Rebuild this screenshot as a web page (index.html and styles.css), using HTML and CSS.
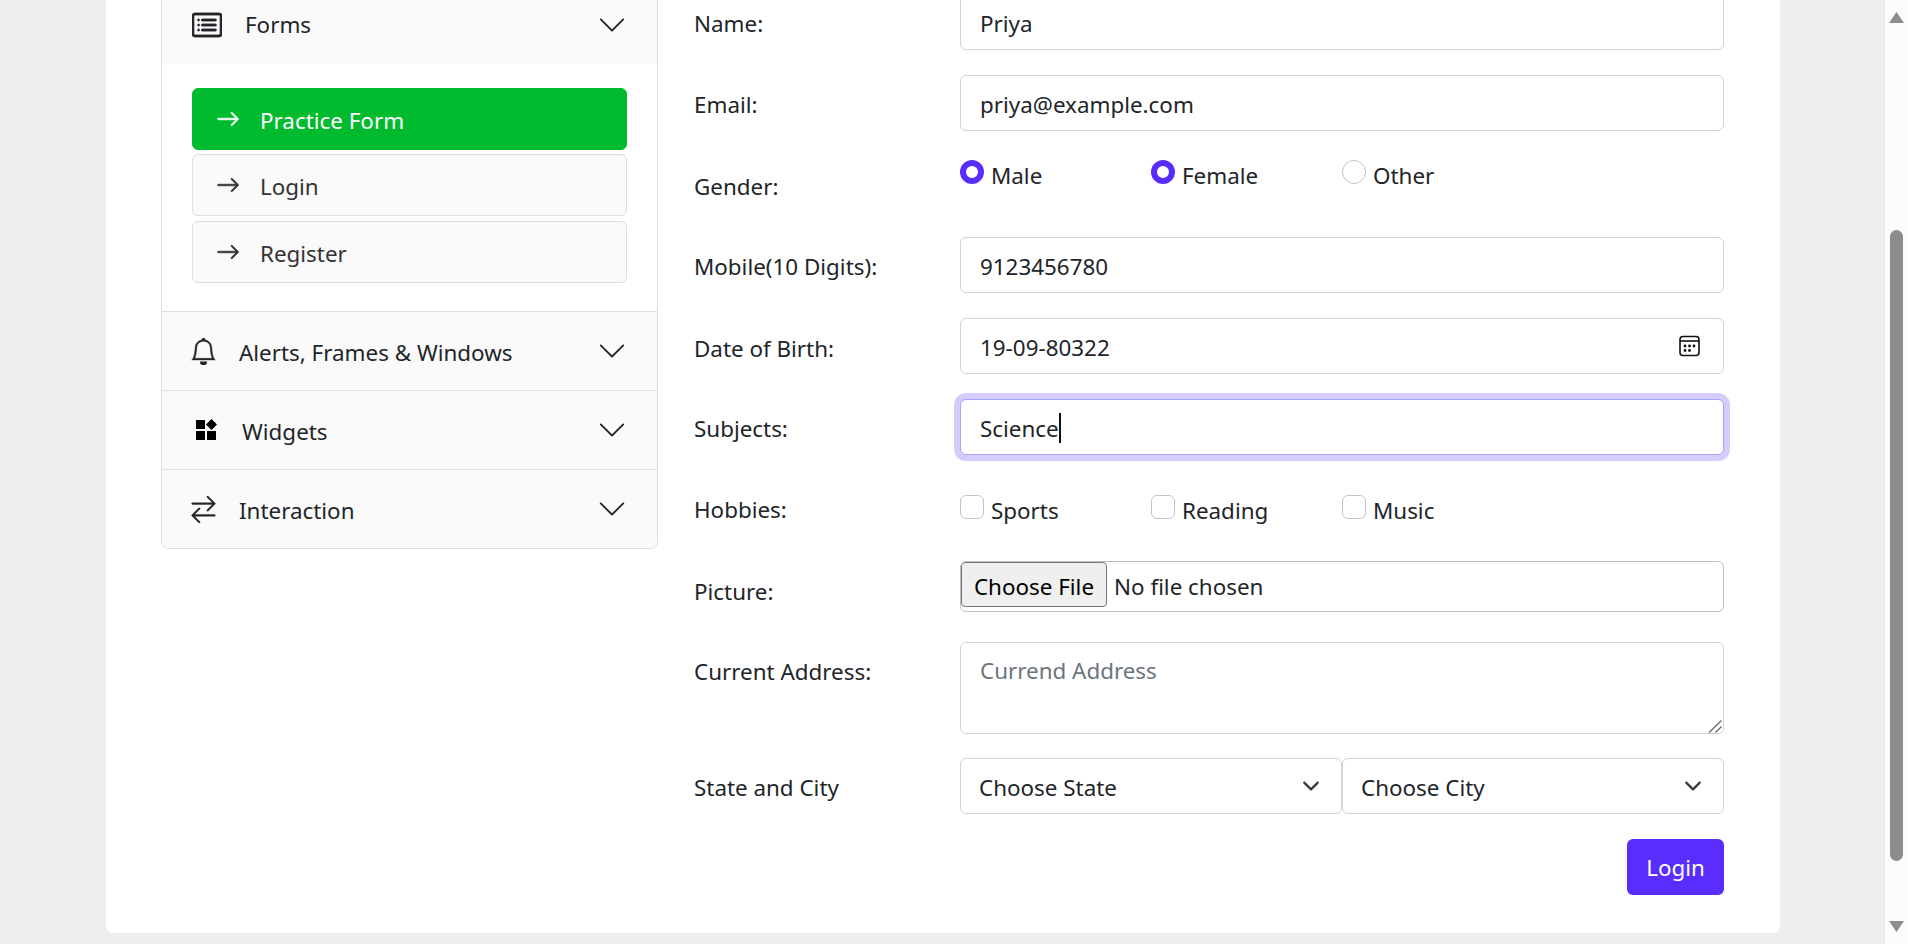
FILE: index.html
```html
<!DOCTYPE html>
<html lang="en">
<head>
<meta charset="utf-8">
<title>Practice Form</title>
<link rel="stylesheet" href="styles.css">
</head>
<body>
<div class="app">
  <main class="viewport">
    <div class="card">
      <nav class="accordion">
        <div class="acc-head acc-first">
          <svg class="ic ic-forms" viewBox="0 0 16 16" preserveAspectRatio="none" fill="currentColor"><path d="M14.5 3a.5.5 0 0 1 .5.5v9a.5.5 0 0 1-.5.5h-13a.5.5 0 0 1-.5-.5v-9a.5.5 0 0 1 .5-.5h13zm-13-1A1.5 1.5 0 0 0 0 3.5v9A1.5 1.5 0 0 0 1.5 14h13a1.5 1.5 0 0 0 1.5-1.5v-9A1.5 1.5 0 0 0 14.5 2h-13z"/><path d="M5 8a.5.5 0 0 1 .5-.5h7a.5.5 0 0 1 0 1h-7A.5.5 0 0 1 5 8zm0-2.5a.5.5 0 0 1 .5-.5h7a.5.5 0 0 1 0 1h-7a.5.5 0 0 1-.5-.5zm0 5a.5.5 0 0 1 .5-.5h7a.5.5 0 0 1 0 1h-7a.5.5 0 0 1-.5-.5zm-1-5a.5.5 0 1 1-1 0 .5.5 0 0 1 1 0zM4 8a.5.5 0 1 1-1 0 .5.5 0 0 1 1 0zm0 2.5a.5.5 0 1 1-1 0 .5.5 0 0 1 1 0z"/></svg>
          <span class="acc-title t-forms">Forms</span>
          <svg class="chev" viewBox="0 0 16 16" fill="currentColor"><path d="M1.646 4.646a.5.5 0 0 1 .708 0L8 10.293l5.646-5.647a.5.5 0 0 1 .708.708l-6 6a.5.5 0 0 1-.708 0l-6-6a.5.5 0 0 1 0-.708z"/></svg>
        </div>
        <div class="acc-body">
          <a class="menu-btn active"><svg class="arrow" viewBox="0 0 16 16" fill="currentColor"><path d="M1 8a.5.5 0 0 1 .5-.5h11.793l-3.147-3.146a.5.5 0 0 1 .708-.708l4 4a.5.5 0 0 1 0 .708l-4 4a.5.5 0 0 1-.708-.708L13.293 8.5H1.5A.5.5 0 0 1 1 8z"/></svg><span>Practice Form</span></a>
          <a class="menu-btn"><svg class="arrow" viewBox="0 0 16 16" fill="currentColor"><path d="M1 8a.5.5 0 0 1 .5-.5h11.793l-3.147-3.146a.5.5 0 0 1 .708-.708l4 4a.5.5 0 0 1 0 .708l-4 4a.5.5 0 0 1-.708-.708L13.293 8.5H1.5A.5.5 0 0 1 1 8z"/></svg><span>Login</span></a>
          <a class="menu-btn"><svg class="arrow" viewBox="0 0 16 16" fill="currentColor"><path d="M1 8a.5.5 0 0 1 .5-.5h11.793l-3.147-3.146a.5.5 0 0 1 .708-.708l4 4a.5.5 0 0 1 0 .708l-4 4a.5.5 0 0 1-.708-.708L13.293 8.5H1.5A.5.5 0 0 1 1 8z"/></svg><span>Register</span></a>
        </div>
        <div class="acc-head">
          <svg class="ic ic-std" viewBox="0 0 16 16" fill="currentColor"><path d="M8 16a2 2 0 0 0 2-2H6a2 2 0 0 0 2 2zM8 1.918l-.797.161A4.002 4.002 0 0 0 4 6c0 .628-.134 2.197-.459 3.742-.16.767-.376 1.566-.663 2.258h10.244c-.287-.692-.502-1.49-.663-2.258C12.134 8.197 12 6.628 12 6a4.002 4.002 0 0 0-3.203-3.92L8 1.917zM14.22 12c.223.447.481.801.78 1H1c.299-.199.557-.553.78-1C2.68 10.2 3 6.88 3 6c0-2.42 1.72-4.44 4.005-4.901a1 1 0 1 1 1.99 0A5.002 5.002 0 0 1 13 6c0 .88.32 4.2 1.22 6z"/></svg>
          <span class="acc-title">Alerts, Frames &amp; Windows</span>
          <svg class="chev" viewBox="0 0 16 16" fill="currentColor"><path d="M1.646 4.646a.5.5 0 0 1 .708 0L8 10.293l5.646-5.647a.5.5 0 0 1 .708.708l-6 6a.5.5 0 0 1-.708 0l-6-6a.5.5 0 0 1 0-.708z"/></svg>
        </div>
        <div class="acc-head">
          <svg class="ic ic-widgets" viewBox="0 0 22 22" fill="#000"><rect x="1" y="1" width="9" height="9"/><rect x="1" y="12" width="9" height="9"/><rect x="12" y="12" width="9" height="9"/><polygon points="16.5,0 22,5.5 16.5,11 11,5.5"/></svg>
          <span class="acc-title">Widgets</span>
          <svg class="chev" viewBox="0 0 16 16" fill="currentColor"><path d="M1.646 4.646a.5.5 0 0 1 .708 0L8 10.293l5.646-5.647a.5.5 0 0 1 .708.708l-6 6a.5.5 0 0 1-.708 0l-6-6a.5.5 0 0 1 0-.708z"/></svg>
        </div>
        <div class="acc-head acc-last">
          <svg class="ic ic-std" viewBox="0 0 16 16" fill="currentColor"><path d="M1 4.5a.5.5 0 0 1 .5-.5h11.793l-3.147-3.146a.5.5 0 0 1 .708-.708l4 4a.5.5 0 0 1 0 .708l-4 4a.5.5 0 0 1-.708-.708L13.293 5H1.5a.5.5 0 0 1-.5-.5zm14 7a.5.5 0 0 0-.5-.5H2.707l3.147-3.146a.5.5 0 1 0-.708-.708l-4 4a.5.5 0 0 0 0 .708l4 4a.5.5 0 0 0 .708-.708L2.707 12H14.5a.5.5 0 0 0 .5-.5z"/></svg>
          <span class="acc-title">Interaction</span>
          <svg class="chev" viewBox="0 0 16 16" fill="currentColor"><path d="M1.646 4.646a.5.5 0 0 1 .708 0L8 10.293l5.646-5.647a.5.5 0 0 1 .708.708l-6 6a.5.5 0 0 1-.708 0l-6-6a.5.5 0 0 1 0-.708z"/></svg>
        </div>
      </nav>

      <form class="form">
        <div class="row"><label class="lbl">Name:</label><input class="field" type="text" value="Priya"></div>
        <div class="row"><label class="lbl">Email:</label><input class="field" type="email" value="priya@example.com"></div>
        <div class="row"><label class="lbl lbl-low">Gender:</label>
          <div class="opts">
            <label class="opt"><input class="radio" type="radio" checked><span>Male</span></label>
            <label class="opt"><input class="radio" type="radio" checked name="g2"><span>Female</span></label>
            <label class="opt"><input class="radio" type="radio"><span>Other</span></label>
          </div>
        </div>
        <div class="row"><label class="lbl">Mobile(10 Digits):</label><input class="field" type="text" value="9123456780"></div>
        <div class="row"><label class="lbl lbl-low">Date of Birth:</label>
          <div class="date-wrap"><input class="field" type="text" value="19-09-80322">
            <svg class="cal" viewBox="0 0 21 22" fill="none" stroke="#111" stroke-width="1.6"><rect x="1" y="1.5" width="19" height="19" rx="3"/><path d="M1 6h19"/><g fill="#111" stroke="none"><circle cx="6" cy="11" r="1.4"/><circle cx="10.5" cy="11" r="1.4"/><circle cx="15" cy="11" r="1.4"/><circle cx="6" cy="15.5" r="1.4"/><circle cx="10.5" cy="15.5" r="1.4"/></g></svg>
          </div>
        </div>
        <div class="row"><label class="lbl">Subjects:</label>
          <div class="field focused" role="textbox"><span>Science</span><i class="caret"></i></div>
        </div>
        <div class="row"><label class="lbl">Hobbies:</label>
          <div class="opts opts-low">
            <label class="opt"><input class="check" type="checkbox"><span>Sports</span></label>
            <label class="opt"><input class="check" type="checkbox"><span>Reading</span></label>
            <label class="opt"><input class="check" type="checkbox"><span>Music</span></label>
          </div>
        </div>
        <div class="row"><label class="lbl lbl-low">Picture:</label><input class="file" type="file"></div>
        <div class="row row-area"><label class="lbl">Current Address:</label><textarea class="field area" placeholder="Currend Address"></textarea></div>
        <div class="row"><label class="lbl">State and City</label>
          <div class="selects">
            <select class="field sel"><option>Choose State</option></select>
            <select class="field sel"><option>Choose City</option></select>
          </div>
        </div>
        <div class="actions"><button class="submit" type="button">Login</button></div>
      </form>
    </div>
  </main>
  <aside class="scrollbar">
    <svg class="sb-arrow sb-up" viewBox="0 0 15 11"><polygon points="7.5,0 15,11 0,11"/></svg>
    <div class="sb-thumb"></div>
    <svg class="sb-arrow sb-down" viewBox="0 0 15 11"><polygon points="0,0 15,0 7.5,11"/></svg>
  </aside>
</div>
</body>
</html>
```
FILE: styles.css
```css
* { box-sizing: border-box; }
html, body { margin: 0; height: 100%; overflow: hidden; }
body { font-family: "Noto Sans", "Open Sans", sans-serif; font-size: 22.4px; color: #212529; }

.app { display: flex; height: 944px; }
.viewport {
  flex: 1;
  min-width: 0;
  background: #eee;
  display: flex;
  flex-direction: column;
  justify-content: flex-end;
  padding: 0 105px 11px 106px;
  overflow: hidden;
}
.card {
  flex: none;
  background: #fff;
  border-radius: 7px;
  padding: 20px 56px 38px 55px;
  display: flex;
  align-items: flex-start;
  gap: 36px;
}

/* sidebar */
.accordion {
  width: 497px;
  flex: none;
  border: 1px solid #dfdfdf;
  border-radius: 7px;
}
.acc-head {
  height: 79px;
  padding: 0 30px;
  display: flex;
  align-items: center;
  background: #fafafa;
  border-top: 1px solid #dfdfdf;
  color: #212529;
}
.acc-first { border-top: 0; height: 77px; padding-bottom: 2px; }
.acc-last { border-radius: 0 0 7px 7px; }
.acc-title { flex: 1; padding-top: 2px; }
.t-forms { padding-top: 0; margin-left: -1px; }
.ic { flex: none; stroke: currentColor; stroke-width: .25; }
.ic-forms { width: 30px; height: 32px; margin-right: 24px; stroke-width: .45; }
.ic-std { width: 27px; height: 27px; margin: 0 21.7px 0 -1.7px; }
.ic-widgets { stroke: none; width: 22px; height: 22px; margin: 0 25px 0 3px; }
.chev { flex: none; width: 30px; height: 30px; }

.acc-body {
  padding: 24px 30px 28px;
  display: flex;
  flex-direction: column;
  gap: 4px;
  background: #fff;
}
.menu-btn {
  height: 62px;
  display: flex;
  align-items: center;
  gap: 20.5px;
  padding: 0 22.5px;
  background: #fafafa;
  border: 1px solid #dedede;
  border-radius: 6px;
  color: #333;
}
.menu-btn:last-child { margin-top: 1px; }
.menu-btn span { padding-top: 2px; }
.menu-btn.active { background: #00bb2e; border-color: #00bb2e; color: #fff; }
.arrow { flex: none; width: 24px; height: 24px; stroke: currentColor; stroke-width: .5; }

/* form */
.form { flex: 1; min-width: 0; padding-top: 8px; }
.row {
  display: grid;
  grid-template-columns: 266px 764px;
  min-height: 56px;
  margin-bottom: 25px;
}
.row-area { margin-bottom: 24px; }
.lbl { padding-top: 15px; line-height: 30px; }
.lbl-low { padding-top: 16px; }
.field {
  display: block;
  width: 100%;
  height: 56px;
  padding: 2px 19px 0;
  border: 1px solid #ced4da;
  border-radius: 6px;
  background: #fff;
  color: #212529;
  font: inherit;
  outline: 0;
}
.focused {
  display: flex;
  align-items: center;
  border-color: #a2a6fb;
  box-shadow: 0 0 0 6px #d6ccfc;
}
.caret { width: 2px; height: 30px; background: #111; }
.date-wrap { position: relative; }
.cal { position: absolute; right: 24px; top: 17px; width: 21px; height: 22px; }
.opts { display: grid; grid-template-columns: repeat(3, 191px); align-self: start; padding-top: 4px; }
.opts-low { padding-top: 15px; }
.opt { display: flex; align-items: flex-start; gap: 7px; line-height: 30px; }
.opt span { padding-top: 1px; }
.radio, .check {
  appearance: none;
  margin: 0;
  flex: none;
  width: 24px;
  height: 24px;
  background: #fff;
  border: 1px solid #c4c4c4;
}
.radio { border-radius: 50%; }
.radio:checked { background: #fff; border: 6px solid #5a2dff; }
.check { border-radius: 6px; }
.file {
  display: block;
  width: 100%;
  height: 51px;
  border: 1px solid #bdbdbd;
  border-radius: 6px;
  font: inherit;
  color: #212529;
  padding: 0;
}
.file::file-selector-button {
  height: 45px;
  width: 146px;
  padding: 3px 0 0;
  margin: 0 7px 0 0;
  background: #efefef;
  border: 1px solid #767676;
  border-radius: 4px;
  font: inherit;
  color: #000;
}
.area { height: 92px; padding-top: 13px; line-height: 30px; resize: vertical; }
.area::placeholder { color: #6c757d; opacity: 1; }
.area::-webkit-resizer {
  background: url("data:image/svg+xml,%3csvg xmlns='http://www.w3.org/2000/svg' viewBox='0 0 16 16'%3e%3cpath fill='none' stroke='%23666' stroke-width='1.3' d='M1.5 15 14 3M8 15l6-6'/%3e%3c/svg%3e") no-repeat center / 16px 16px;
}
.selects { display: grid; grid-template-columns: 1fr 1fr; }
.sel {
  appearance: none;
  padding-left: 18px;
  background-image: url("data:image/svg+xml,%3csvg xmlns='http://www.w3.org/2000/svg' viewBox='0 0 16 16'%3e%3cpath fill='none' stroke='%23343a40' stroke-linecap='round' stroke-linejoin='round' stroke-width='2' d='m2 5 6 6 6-6'/%3e%3c/svg%3e");
  background-repeat: no-repeat;
  background-position: right 18px center;
  background-size: 24px 18px;
}
.actions { display: flex; justify-content: flex-end; }
.submit {
  height: 56px;
  width: 97px;
  border: 0;
  border-radius: 6px;
  background: #5a2dff;
  color: #fff;
  font: inherit;
}

/* window scrollbar */
.scrollbar {
  flex: none;
  width: 23px;
  background: #fcfcfc;
  display: flex;
  flex-direction: column;
  align-items: center;
  padding: 12px 0 12px;
}
.sb-arrow { width: 15px; height: 11px; fill: #8c8c8c; flex: none; }
.sb-thumb { width: 13px; height: 631px; margin-top: 207px; border-radius: 7px; background: #8c8c8c; flex: none; }
.sb-down { margin-top: auto; }
```
